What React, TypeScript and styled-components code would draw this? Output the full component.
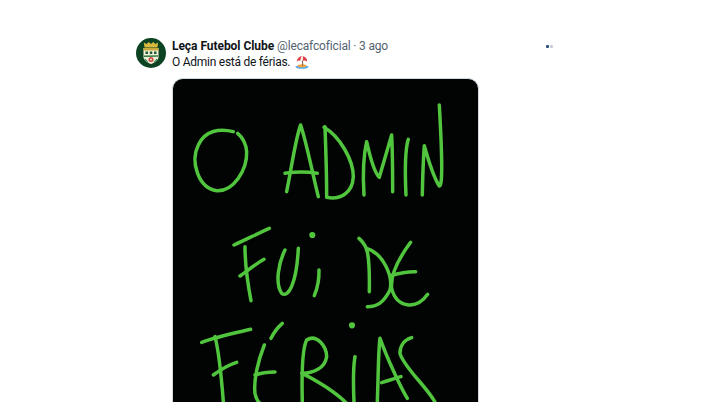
import React from "react";
import styled, { createGlobalStyle } from "styled-components";

const Global = createGlobalStyle`
  html, body { margin: 0; padding: 0; background: #fff; overflow: hidden; }
  #root { height: 402px; overflow: hidden; }
`;
const Page = styled.main`
  height: 402px;
  overflow: hidden;
  padding: 38px 0 0 136px;
  box-sizing: border-box;
  font-family: Roboto, "Liberation Sans", sans-serif;
`;
const Tweet = styled.article`
  width: 417px;
  display: flex;
  gap: 6px;
`;
const Avatar = styled.svg`
  width: 30px;
  height: 30px;
  flex: none;
`;
const Body = styled.div`
  flex: 1;
  min-width: 0;
`;
const Header = styled.header`
  display: flex;
  align-items: center;
  justify-content: space-between;
  height: 16px;
`;
const Meta = styled.div`
  display: flex;
  align-items: baseline;
  gap: 3px;
  font-size: 12px;
  line-height: 16px;
  white-space: nowrap;
`;
const Name = styled.strong`
  font-weight: 700;
  color: #0f1419;
  letter-spacing: -0.05px;
`;
const Handle = styled.span`
  color: #536471;
  letter-spacing: -0.17px;
`;
const More = styled.div`
  display: flex;
  gap: 1px;
`;
const Dot = styled.i<{ $tone: string }>`
  width: 3px;
  height: 3px;
  background: ${(p) => p.$tone};
  border-radius: 1px;
`;
const Text = styled.p`
  margin: 0;
  display: flex;
  align-items: center;
  gap: 5px;
  height: 16px;
  font-size: 12px;
  line-height: 16px;
  letter-spacing: -0.26px;
  color: #0f1419;
`;
const Emoji = styled.svg`
  width: 14px;
  height: 14px;
`;
const Media = styled.figure`
  margin: 8px 0 0;
  width: 307px;
  height: 400px;
  box-sizing: border-box;
  background: #020303;
  border: 1px solid #cfd9de;
  border-radius: 11px;
  overflow: hidden;
`;
const Drawing = styled.svg`
  display: block;
  width: 305px;
  height: 398px;
`;

const top = [
  "M190 155C150 145 105 150 85 195C60 245 85 325 140 332C190 335 232 270 230 215C228 190 215 170 203 160",
  "M350 335C365 260 378 170 392 135C410 190 430 290 445 350",
  "M345 280C380 275 410 275 442 280",
  "M465 140C468 220 470 290 470 350",
  "M462 142C510 170 550 240 550 290C548 340 510 360 470 352",
  "M582 345C578 280 582 220 590 185C600 230 615 280 628 292C640 250 655 200 665 165C668 220 668 280 668 335",
  "M715 178C705 210 705 280 708 345",
  "M757 345C758 290 760 240 763 197C775 240 790 290 808 318C820 320 815 200 808 75",
];
const bottom = [
  "M192 105C225 90 265 70 298 55",
  "M225 110C225 170 235 230 243 272",
  "M210 198C235 180 260 160 282 148",
  "M345 120C325 160 315 220 335 250C355 265 380 220 385 115",
  "M447 180C448 210 440 240 433 257",
  "M567 85C590 105 600 120 598 245",
  "M590 115C640 130 670 200 660 240C640 280 620 290 592 290",
  "M722 97C690 140 660 190 665 235C680 295 740 300 773 253",
  "M660 197C685 190 710 184 737 185",
  "M95 397C140 380 190 370 242 358",
  "M135 380C148 430 155 510 160 576",
  "M130 495C150 480 175 465 200 457",
  "M337 340C320 355 310 370 303 385",
  "M283 405C265 450 250 510 255 550C258 565 265 576 270 580",
  "M255 495C275 488 295 486 315 486",
  "M397 576C395 500 395 420 410 390C440 370 470 410 470 440C465 475 430 490 395 490C440 510 500 550 530 580",
  "M555 440C548 480 550 530 552 576",
  "M622 576C625 500 625 420 630 385C650 440 690 530 712 565",
  "M635 518C655 512 675 505 693 500",
  "M725 383C700 390 690 410 690 430C700 470 770 530 795 576",
];

export default function App() {
  return (
    <Page>
      <Global />
      <Tweet>
        <Avatar viewBox="0 0 30 30" role="img" aria-label="Leça FC">
          <circle cx="15" cy="15" r="15" fill="#0c4423" />
          <path d="M8.500 9.500 7.900 4.500l2.600 1.600L12.800 4 15 6l2.200-2 2.300 2.100 2.600-1.600-.6 5z" fill="#d9b93e" />
          <path d="M7.500 10h15v9c0 3.500-3.700 5.500-7.500 7-3.800-1.500-7.500-3.500-7.500-7z" fill="#f3f1dc" />
          <path d="M7.500 10h15v2.500h-15z" fill="#c9ab3c" />
          <path d="M9.500 13.500h2.500v2.500H9.500zM13.800 13.500h2.500v2.500h-2.500zM18 13.500h2.500v2.500H18z" fill="#1c5a30" />
          <path d="M8 17.500l14-.3v1.500L8 19zM9 20.500l3.500 3.500-1.600-.2-2.400-2zM21 20.500 17.500 24l1.600-.2 2.400-2z" fill="#2c7a45" />
          <circle cx="15" cy="21.500" r="2.500" fill="#c8453c" />
          <circle cx="15" cy="21.500" r=".9" fill="#f3f1dc" />
        </Avatar>
        <Body>
          <Header>
            <Meta>
              <Name>Leça Futebol Clube</Name>
              <Handle>@lecafcoficial · 3 ago</Handle>
            </Meta>
            <More>
              <Dot $tone="#2f4f7c" />
              <Dot $tone="#c4ccd4" />
            </More>
          </Header>
          <Text>
            O Admin está de férias.
            <Emoji viewBox="0 0 14 14" aria-hidden="true">
              <ellipse cx="7" cy="12" rx="6.500" ry="1.800" fill="#55acee" />
              <ellipse cx="7" cy="10.800" rx="4.500" ry="1.500" fill="#f4a640" />
              <path d="M7.300 4 7.800 11" stroke="#8a5a3a" strokeWidth="1" />
              <path d="M1.800 6.500C2 3 5 1 7.500 1.200 10.500 1.500 12.500 4 12 6.500 10.500 5.200 9.500 5.200 8.500 5.800 7 4.800 5.800 4.800 4.800 5.800 3.800 5.200 2.800 5.500 1.800 6.500Z" fill="#dd3b44" />
              <path d="M6.300 1.400 5.300 5.300 8 5.500 8 1.300Z" fill="#f5f2ee" />
            </Emoji>
          </Text>
          <Media>
            <Drawing viewBox="173 79 305 398">
              <g fill="none" stroke="#50c53d" strokeLinecap="round" strokeLinejoin="round" strokeWidth="10.500">
                <g transform="translate(170 80) scale(.3333)">
                  {top.map((d) => <path key={d} d={d} />)}
                </g>
                <g transform="translate(170 210) scale(.3333)">
                  {bottom.map((d) => <path key={d} d={d} />)}
                  <circle cx="427" cy="75" r="4" fill="#50c53d" />
                  <circle cx="546" cy="346" r="4" fill="#50c53d" />
                </g>
              </g>
            </Drawing>
          </Media>
        </Body>
      </Tweet>
    </Page>
  );
}
